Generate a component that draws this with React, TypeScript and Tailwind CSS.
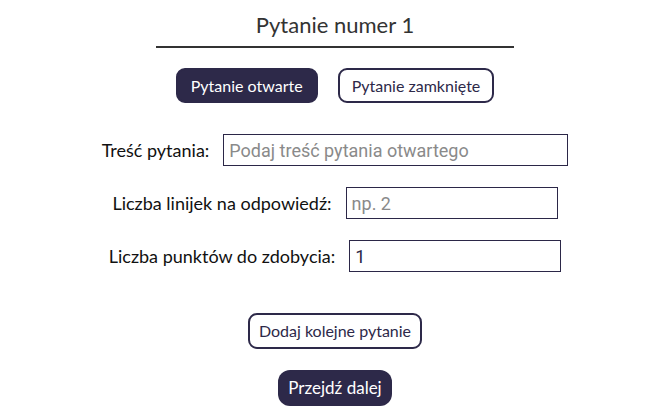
import React, { useState } from "react";

const Row = ({ label, placeholder, value, width }: any) => {
  return (
    <div className="flex items-center justify-center gap-[14px]">
      <label className="text-[18px] text-[#111]">{label}</label>
      <input
        defaultValue={value}
        placeholder={placeholder}
        className={`h-[32px] ${width} border border-[#2b2747] px-[5px] text-[18px] text-[#2b2747] placeholder:text-[#8a8a8a] outline-none font-['Roboto',Arial,sans-serif]`}
      />
    </div>
  );
};

const App = () => {
  const [open, setOpen] = useState(true);
  return (
    <main className="w-[658px] h-[420px] bg-white pl-[12px] flex flex-col items-center font-['Lato',sans-serif]">
      <h1 className="mt-[10px] w-[358px] text-center text-[22px] leading-[30px] text-[#333] pb-[6px] border-b-2 border-[#333]">
        Pytanie numer 1
      </h1>
      <div className="mt-[20px] flex gap-[20px]">
        <button
          onClick={() => setOpen(true)}
          className={`h-[35px] px-[13px] rounded-[9px] border-2 border-[#2d2949] text-[16px] ${
            open ? "bg-[#2d2949] text-white" : "bg-white text-[#2d2949]"
          }`}
        >
          Pytanie otwarte
        </button>
        <button
          onClick={() => setOpen(false)}
          className={`h-[35px] px-[12px] rounded-[9px] border-2 border-[#2d2949] text-[16px] ${
            !open ? "bg-[#2d2949] text-white" : "bg-white text-[#2d2949]"
          }`}
        >
          Pytanie zamknięte
        </button>
      </div>
      <div className="mt-[31px] flex flex-col gap-[21px]">
        <Row label="Treść pytania:" placeholder="Podaj treść pytania otwartego" width="w-[345px]" />
        <Row label="Liczba linijek na odpowiedź:" placeholder="np. 2" width="w-[212px]" />
        <Row label="Liczba punktów do zdobycia:" value="1" width="w-[212px]" />
      </div>
      <button className="mt-[41px] h-[36px] px-[9px] rounded-[9px] border-2 border-[#2d2949] bg-white text-[16px] text-[#2d2949]">
        Dodaj kolejne pytanie
      </button>
      <button className="mt-[21px] h-[36px] px-[10px] rounded-[12px] bg-[#2d2949] text-[17px] text-white">
        Przejdź dalej
      </button>
    </main>
  );
};

export default App;
